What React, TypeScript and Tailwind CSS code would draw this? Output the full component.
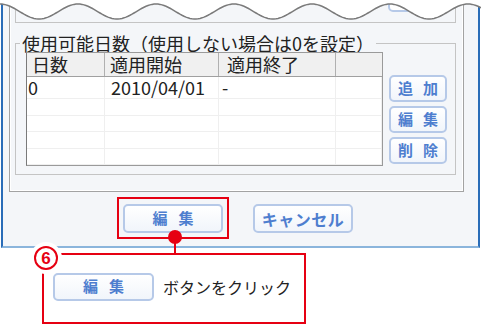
const wavePts: string[] = []
for (let x = 0; x <= 482; x += 2) {
  const y = 11.5 - 7.5 * Math.cos((2 * Math.PI * x) / 78)
  wavePts.push(`${x},${y.toFixed(2)}`)
}

function Btn({ label, className, text }: { label: string; className: string; text: string }) {
  return (
    <div
      className={`flex items-center justify-center whitespace-nowrap rounded-[5px] border-2 border-[#b6c9e8] bg-linear-to-b from-white to-[#f1f5fb] font-bold text-[#4e7ecf] ${className}`}
    >
      <span className={text}>{label}</span>
    </div>
  )
}

const cols = ['w-[78px]', 'w-[114px]', 'w-[117px]', 'flex-1']

function Row({ cells, h }: { cells: string[]; h: string }) {
  return (
    <div className={`flex ${h} border-b border-[#efefef]`}>
      {cols.map((c, i) => (
        <div key={i} className={`${c} border-r border-[#efefef] text-[18px] leading-[21px] text-[#222] ${['pl-[1px]', 'pl-[6px]', 'pl-[3px]', ''][i]}`}>
          {cells[i] || ''}
        </div>
      ))}
    </div>
  )
}

export default function App() {
  return (
    <div className="relative h-[325px] w-[481px] overflow-hidden bg-white font-['Noto_Sans_CJK_JP',sans-serif]">
      <div className="relative ml-[1px] h-[248px] w-[479px] border-x-2 border-b-2 border-x-[#2a6db8] border-b-[#8bb5dc] bg-[#f4f6f9]">
        {/* inner panel */}
        <div className="ml-[6px] h-[192px] w-[455px] border-x border-b border-[#a3a3a3] shadow-[inset_1px_0_0_#fff,inset_-1px_-1px_0_#fff]">
          <div className="ml-[5px] flex h-[23px] w-[441px] border-x border-b border-[#c4c4c4]">
            <div className="-mt-[16px] ml-[372px] h-[28px] w-[58px] rounded-[5px] border-2 border-[#b6c9e8] bg-white" />
          </div>
          <fieldset className="ml-[5px] mt-[11px] w-[441px] border border-[#c4c4c4] px-0 pb-[8px]">
            <legend className="ml-[4px] px-[2px] text-[18px] leading-[18px] text-[#222]">
              使用可能日数（使用しない場合は0を設定）
            </legend>
            <div className="flex pl-[10px]">
              <div className="flex h-[114px] w-[357px] flex-col overflow-hidden border border-[#9a9a9a] border-l-[#7a7a7a] bg-white">
                <div className="flex h-[24px] border-b border-[#a0a0a0] bg-[#f0f0f0]">
                  {['日数', '適用開始', '適用終了', ''].map((t, i) => (
                    <div key={i} className={`${cols[i]} border-r border-[#b0b0b0] text-[18px] leading-[23px] text-[#222] ${['pl-[5px]', 'pl-[5px]', 'pl-[8px]', 'border-r-0'][i]}`}>
                      {t}
                    </div>
                  ))}
                </div>
                <Row cells={['0', '2010/04/01', '-']} h="h-[22px]" />
                <Row cells={[]} h="h-[20px]" />
                <Row cells={[]} h="h-[20px]" />
                <Row cells={[]} h="h-[20px]" />
                <Row cells={[]} h="h-[20px]" />
              </div>
              <div className="ml-[6px] mt-[23px] flex w-[58px] flex-col gap-[4px]">
                <Btn label="追加" className="h-[27px] text-[15px]" text="mr-[-10px] tracking-[10px]" />
                <Btn label="編集" className="h-[27px] text-[15px]" text="mr-[-10px] tracking-[10px]" />
                <Btn label="削除" className="h-[27px] text-[15px]" text="mr-[-10px] tracking-[10px]" />
              </div>
            </div>
          </fieldset>
        </div>

        <div className="ml-[114px] mt-[5px] flex items-start">
          <div className="border-2 border-[#e60012] px-[4px] pb-[4px] pt-[5px]">
            <Btn label="編集" className="h-[29px] w-[100px] text-[15px]" text="mr-[-11px] tracking-[11px]" />
          </div>
          <Btn label="キャンセル" className="ml-[24px] mt-[7px] h-[29px] w-[100px] text-[16px]" text="tracking-[0.5px]" />
        </div>

        {/* torn top edge */}
        <svg className="absolute -left-[3px] top-0" width="482" height="24" viewBox="0 0 482 24">
          <path d={`M0,0 L${wavePts.join(' L')} L482,0 Z`} fill="#fff" />
          <polyline points={wavePts.join(' ')} fill="none" stroke="#7a7a7a" strokeWidth="1.5" />
        </svg>
      </div>

      {/* callout */}
      <div className="ml-[42px] mt-[5px] flex h-[71px] w-[264px] items-center border-2 border-[#e60012] pb-[4px] pl-[9px]">
        <Btn label="編集" className="h-[28px] w-[101px] text-[15px]" text="mr-[-11px] tracking-[11px]" />
        <span className="ml-[9px] text-[16px] text-[#222]">ボタンをクリック</span>
      </div>

      <div className="absolute left-[174px] top-[237px] h-[17px] w-[2px] bg-[#e60012]" />
      <div className="absolute left-[168px] top-[230px] h-[14px] w-[14px] rounded-full bg-[#e60012]" />
      <div className="absolute left-[30px] top-[242px] flex h-[32px] w-[32px] items-center justify-center rounded-full bg-white">
        <div className="flex h-[24px] w-[24px] items-center justify-center rounded-full border-2 border-[#e60012] bg-white font-['Liberation_Sans',sans-serif] text-[17px] font-bold leading-none text-[#e60012]">
          6
        </div>
      </div>
    </div>
  )
}
